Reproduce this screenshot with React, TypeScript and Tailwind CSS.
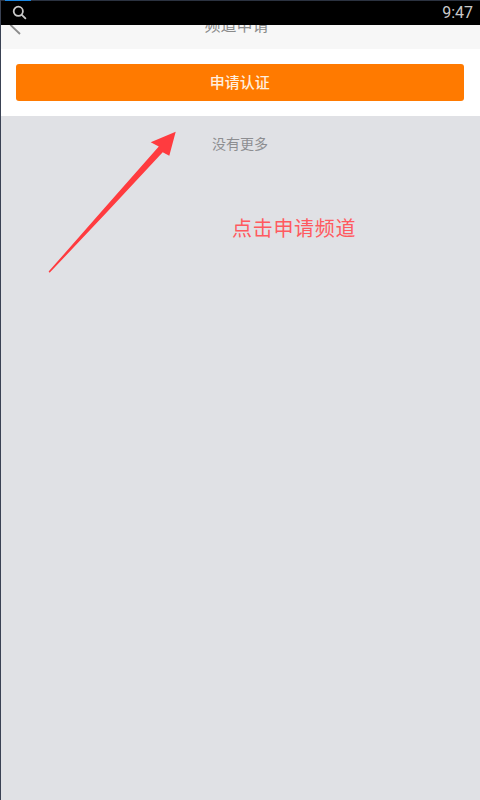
import React from 'react';

const CJK = "font-['Roboto','Noto_Sans_CJK_SC',sans-serif]";

function StatusBar() {
    return (
        <div className="absolute top-0 left-0 right-0 h-[25px] bg-black">
            <div className="h-px bg-[#2b3240]">
                <div className="ml-[4px] w-[26px] h-px bg-[#1a86e0]" />
            </div>
            <div className="flex items-center justify-between h-[24px] pl-[10.5px] pr-[7px] pb-[2px] text-[#c9c9c9]">
                <svg width="15" height="15" viewBox="0 0 15 15" fill="none" stroke="currentColor" strokeWidth="1.8" strokeLinecap="round">
                    <circle cx="6.3" cy="6.3" r="4.6" />
                    <path d="M9.8 9.8 L13.4 13.4" />
                </svg>
                <span className="text-[16px] leading-none pt-[2px] font-['Roboto',sans-serif]">9:47</span>
            </div>
        </div>
    );
}

function Arrow() {
    return (
        <svg className="absolute top-[125px] left-[43.5px]" width="138" height="152" viewBox="45 125 138 152">
            <path d="M175.7 131.7 L150.7 142.3 L158.8 146.6 L103.4 209.3 L48.6 271.6 L49.6 272.8 L106.6 212.5 L162.7 152.3 L169.3 155.7 Z" fill="#ff3b3f" />
        </svg>
    );
}

export default function App() {
    return (
        <div className={`relative w-[480px] h-[800px] overflow-hidden bg-[#e0e1e5] border-l-[1.5px] border-[#3a4254] ${CJK}`}>
            <div className="h-[49px] bg-[#f7f7f7] flex justify-center pt-[17px] relative">
                <span className="text-[16px] leading-[18px] text-[#8a8a8a] -ml-[8px]">频道申请</span>
                <svg className="absolute left-[7px] top-[14px]" width="16" height="24" viewBox="0 0 16 24" fill="none" stroke="#8c8c8c" strokeWidth="1.8">
                    <path d="M12 2 L3 11.5 L12 20" />
                </svg>
            </div>
            <div className="h-[67px] bg-white pt-[15px] pl-[14.5px] pr-[16px]">
                <button className="w-full h-[37px] pt-px rounded-[3px] bg-[#ff7a00] text-[15px] font-medium text-[#ffeedd]">申请认证</button>
            </div>
            <p className="mt-[20px] text-center text-[14px] leading-[16px] text-[#8d8e91] -ml-[1px]">没有更多</p>
            <StatusBar />
            <Arrow />
            <span className="absolute left-[231px] top-[216px] text-[20px] leading-[26px] tracking-[0.7px] text-[#ff5a5f]">点击申请频道</span>
        </div>
    );
}
